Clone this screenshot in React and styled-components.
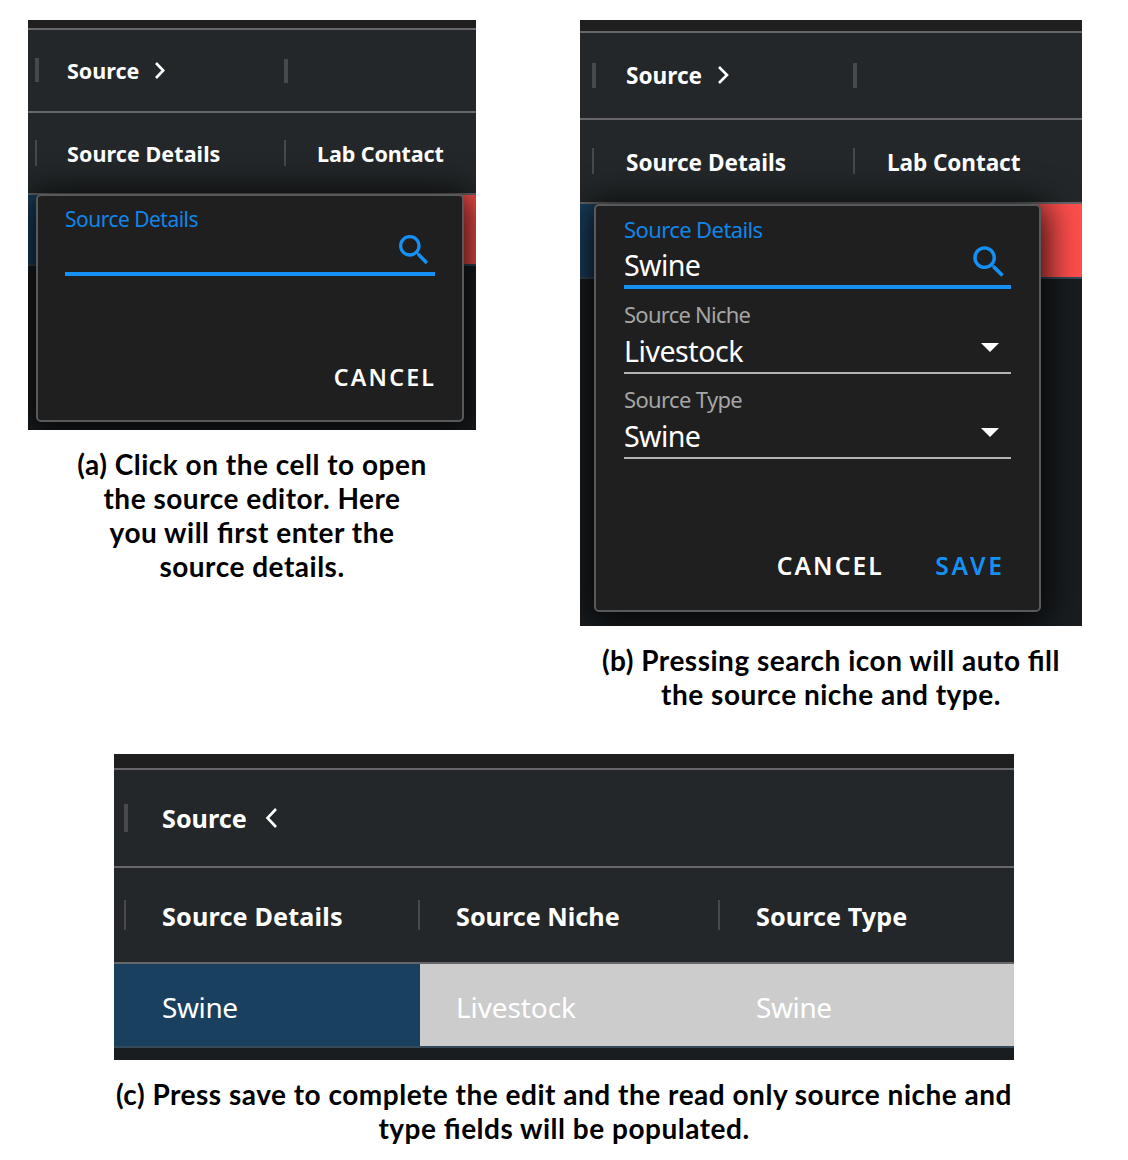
import React from "react";
import styled, { createGlobalStyle, css } from "styled-components";

const Global = createGlobalStyle`
  *, *::before, *::after { box-sizing: border-box; }
  html, body { margin: 0; background: #fff; }
`;

const uiFont = `"Noto Sans", "Open Sans", sans-serif`;

const Page = styled.main`
  width: 1128px;
  height: 1160px;
  padding: 20px 46px 0 28px;
  overflow: hidden;
`;

const TopFigures = styled.div`
  display: flex;
  justify-content: space-between;
  align-items: flex-start;
  height: 734px;
`;

const Figure = styled.figure`
  margin: ${(p) => p.$margin || "0"};
  width: ${(p) => p.$width}px;
`;

const Caption = styled.figcaption`
  margin: ${(p) => p.$margin};
  font: 700 28px/34px Lato, sans-serif;
  letter-spacing: 0.51px;
  font-feature-settings: "liga" 1;
  color: #000;
  text-align: center;
  white-space: nowrap;
`;

const Panel = styled.div`
  position: relative;
  height: ${(p) => p.$height}px;
  overflow: hidden;
  background: #191d20;
`;

const TopStrip = styled.div`
  height: ${(p) => p.$height}px;
  background: #1f1f1f;
`;

const HeaderRow = styled.div`
  display: flex;
  align-items: center;
  height: ${(p) => p.$height}px;
  padding-left: ${(p) => p.$inset}px;
  border-top: 2px solid #67676b;
  background: #232729;
`;

const HeaderCell = styled.div`
  display: flex;
  align-items: center;
  flex: none;
  width: ${(p) => p.$width}px;
`;

const Tick = styled.span`
  flex: none;
  width: ${(p) => p.$indent}px;
  height: ${(p) => p.$height}px;
  border-left: ${(p) => (p.$thick ? 4 : 2)}px solid #47494c;
`;

const Text = styled.span`
  margin-top: ${(p) => p.$drop || 0}px;
  font-family: ${uiFont};
  font-weight: ${(p) => p.$weight || 400};
  font-size: ${(p) => p.$size}px;
  letter-spacing: ${(p) => p.$track || 0}px;
  color: ${(p) => p.$color || "#fff"};
  line-height: 1.2;
  white-space: nowrap;
`;

const Chevron = styled.svg`
  flex: none;
  width: ${(p) => p.$width}px;
  height: ${(p) => p.$height}px;
  margin-left: ${(p) => p.$gap}px;
  fill: none;
  stroke: #fff;
  stroke-width: 2.6;
`;

const BodyRow = styled.div`
  display: flex;
  height: ${(p) => p.$height}px;
  border-top: 2px solid #67676b;
  border-bottom: 2px solid #34495a;
`;

const BodyCell = styled.div`
  display: flex;
  align-items: center;
  flex: ${(p) => (p.$width ? `0 0 ${p.$width}px` : "1")};
  padding: ${(p) => p.$pad || "0"};
  background: ${(p) => p.$bg};
`;

const Dialog = styled.div`
  position: absolute;
  left: ${(p) => p.$left}px;
  top: ${(p) => p.$top}px;
  width: ${(p) => p.$width}px;
  height: ${(p) => p.$height}px;
  padding: ${(p) => p.$pad};
  display: flex;
  flex-direction: column;
  background: #1f1f1f;
  border: 2px solid #58595b;
  border-radius: 5px;
  box-shadow: 0 4px 34px 6px rgba(0, 0, 0, 0.85);
`;

const Field = styled.div`
  display: flex;
  flex-direction: column;
  flex: none;
  height: ${(p) => p.$height}px;
`;

const FieldLabel = styled(Text)`
  line-height: 26px;
`;

const FieldInput = styled.div`
  display: flex;
  align-items: center;
  justify-content: space-between;
  height: ${(p) => p.$height}px;
  ${(p) =>
    p.$active
      ? css`border-bottom: 4px solid #1590f5;`
      : css`border-bottom: 2px solid #b4b4b4;`}
`;

const FieldValue = styled(Text)`
  line-height: 34px;
`;

const SearchSvg = styled.svg`
  flex: none;
  width: ${(p) => p.$size}px;
  height: ${(p) => p.$size}px;
  margin: ${(p) => p.$margin};
  fill: #1590f5;
`;

const SearchIcon = ({ size, margin }) => (
  <SearchSvg viewBox="0 0 24 24" $size={size} $margin={margin}>
    <path d="M15.5 14h-.79l-.28-.27C15.41 12.59 16 11.11 16 9.5 16 5.91 13.09 3 9.5 3S3 5.91 3 9.5 5.91 16 9.5 16c1.61 0 3.09-.59 4.23-1.57l.27.28v.79l5 4.99L20.49 19l-4.99-5zm-6 0C7.01 14 5 11.99 5 9.5S7.01 5 9.5 5 14 7.01 14 9.5 11.99 14 9.5 14z" />
  </SearchSvg>
);

const CaretSvg = styled.svg`
  width: 18px;
  height: 9px;
  margin: 0 12px 4px 0;
  fill: #fff;
`;

const Caret = () => (
  <CaretSvg viewBox="0 0 18 9">
    <path d="M0 0h18L9 9z" />
  </CaretSvg>
);

const Actions = styled.div`
  display: flex;
  justify-content: flex-end;
  gap: ${(p) => p.$gap || 0}px;
  margin-top: auto;
  padding-right: ${(p) => p.$right}px;
`;

const Button = styled.button`
  padding: 0;
  border: 0;
  background: none;
  font: 600 ${(p) => p.$size}px/30px ${uiFont};
  letter-spacing: ${(p) => p.$track}px;
  margin-right: ${(p) => -p.$track}px;
  color: ${(p) => (p.$primary ? "#1590f5" : "#fff")};
`;

export default function App() {
  return (
    <>
      <Global />
      <Page>
        <TopFigures>
          <Figure $width={448}>
            <Panel $height={410}>
              <TopStrip $height={8} />
              <HeaderRow $height={83} $inset={7}>
                <HeaderCell $width={249}>
                  <Tick $thick $indent={32} $height={24} />
                  <Text $weight={700} $size={21.5}>Source</Text>
                  <Chevron viewBox="0 0 10 17" $width={10} $height={17} $gap={16}>
                    <path d="M1 1l7.2 7.5L1 16" />
                  </Chevron>
                </HeaderCell>
                <HeaderCell>
                  <Tick $thick $indent={32} $height={24} />
                </HeaderCell>
              </HeaderRow>
              <HeaderRow $height={82} $inset={7}>
                <HeaderCell $width={249}>
                  <Tick $indent={32} $height={26} />
                  <Text $weight={700} $size={21.5} $track={0.08} $drop={2}>Source Details</Text>
                </HeaderCell>
                <HeaderCell>
                  <Tick $indent={33} $height={26} />
                  <Text $weight={700} $size={21.5} $track={-0.1} $drop={2}>Lab Contact</Text>
                </HeaderCell>
              </HeaderRow>
              <BodyRow $height={73}>
                <BodyCell $width={257} $bg="#1a4060" />
                <BodyCell $bg="#ff4f4d" />
              </BodyRow>
              <Dialog $left={8} $top={174} $width={428} $height={228} $pad="10px 27px 28px">
                <Field $height={85}>
                  <FieldLabel $size={21} $track={-0.52} $color="#1186e8">Source Details</FieldLabel>
                  <FieldInput $active $height={44}>
                    <span />
                    <SearchIcon size={40} margin="0 1px 5px 0" />
                  </FieldInput>
                </Field>
                <Actions $right={1}>
                  <Button $size={23.2} $track={2.2}>CANCEL</Button>
                </Actions>
              </Dialog>
            </Panel>
            <Caption $margin="17px 0 0">
              (a) Click on the cell to open<br />the source editor. Here<br />you will first enter the<br />source details.
            </Caption>
          </Figure>

          <Figure $width={502}>
            <Panel $height={606}>
              <TopStrip $height={11} />
              <HeaderRow $height={87} $inset={12}>
                <HeaderCell $width={261}>
                  <Tick $thick $indent={34} $height={25} />
                  <Text $weight={700} $size={22.6}>Source</Text>
                  <Chevron viewBox="0 0 11 18" $width={11} $height={18} $gap={16}>
                    <path d="M1 1l8 8-8 8" />
                  </Chevron>
                </HeaderCell>
                <HeaderCell>
                  <Tick $thick $indent={34} $height={25} />
                </HeaderCell>
              </HeaderRow>
              <HeaderRow $height={84} $inset={12}>
                <HeaderCell $width={261}>
                  <Tick $indent={34} $height={26} />
                  <Text $weight={700} $size={22.6} $drop={4}>Source Details</Text>
                </HeaderCell>
                <HeaderCell>
                  <Tick $indent={34} $height={26} />
                  <Text $weight={700} $size={22.6} $track={-0.1} $drop={4}>Lab Contact</Text>
                </HeaderCell>
              </HeaderRow>
              <BodyRow $height={77}>
                <BodyCell $width={273} $bg="#1a4060" />
                <BodyCell $bg="#ff4f4d" />
              </BodyRow>
              <Dialog $left={14} $top={184} $width={447} $height={408} $pad="10px 28px 29px">
                <Field $height={85}>
                  <FieldLabel $size={22} $track={-0.6} $color="#1186e8">Source Details</FieldLabel>
                  <FieldInput $active $height={47}>
                    <FieldValue $size={28.6} $track={-0.6} $drop={3}>Swine</FieldValue>
                    <SearchIcon size={42} margin="0 1px 3px 0" />
                  </FieldInput>
                </Field>
                <Field $height={85}>
                  <FieldLabel $size={22} $track={-0.75} $color="#a5a5a5">Source Niche</FieldLabel>
                  <FieldInput $height={47}>
                    <FieldValue $size={28.6} $track={-0.48} $drop={2}>Livestock</FieldValue>
                    <Caret />
                  </FieldInput>
                </Field>
                <Field $height={85}>
                  <FieldLabel $size={22} $track={-0.65} $color="#a5a5a5">Source Type</FieldLabel>
                  <FieldInput $height={47}>
                    <FieldValue $size={28.6} $track={-0.6} $drop={2}>Swine</FieldValue>
                    <Caret />
                  </FieldInput>
                </Field>
                <Actions $gap={53.5} $right={9}>
                  <Button $size={24.6} $track={2.1}>CANCEL</Button>
                  <Button $size={24.6} $track={2.8} $primary>SAVE</Button>
                </Actions>
              </Dialog>
            </Panel>
            <Caption $margin="17px 0 0">
              (b) Pressing search icon will auto fill<br />the source niche and type.
            </Caption>
          </Figure>
        </TopFigures>

        <Figure $width={900} $margin="0 0 0 86px">
          <Panel $height={306}>
            <TopStrip $height={14} />
            <HeaderRow $height={98} $inset={10}>
              <HeaderCell>
                <Tick $thick $indent={38} $height={28} />
                <Text $weight={700} $size={25.2}>Source</Text>
                <Chevron viewBox="0 0 12 20" $width={12} $height={20} $gap={18.5}>
                  <path d="M11 1L2.5 10l8.5 9" />
                </Chevron>
              </HeaderCell>
            </HeaderRow>
            <HeaderRow $height={96} $inset={10}>
              <HeaderCell $width={294}>
                <Tick $indent={38} $height={30} />
                <Text $weight={700} $size={25.2} $track={0.16} $drop={2}>Source Details</Text>
              </HeaderCell>
              <HeaderCell $width={300}>
                <Tick $indent={38} $height={30} />
                <Text $weight={700} $size={25.2} $drop={2}>Source Niche</Text>
              </HeaderCell>
              <HeaderCell>
                <Tick $indent={38} $height={30} />
                <Text $weight={700} $size={25.2} $track={0.05} $drop={2}>Source Type</Text>
              </HeaderCell>
            </HeaderRow>
            <BodyRow $height={86}>
              <BodyCell $width={306} $bg="#1a4060" $pad="6px 0 0 48px">
                <Text $size={28} $track={-0.4}>Swine</Text>
              </BodyCell>
              <BodyCell $width={300} $bg="#ccc" $pad="6px 0 0 36px">
                <Text $size={28} $track={-0.1}>Livestock</Text>
              </BodyCell>
              <BodyCell $bg="#ccc" $pad="6px 0 0 36px">
                <Text $size={28} $track={-0.4}>Swine</Text>
              </BodyCell>
            </BodyRow>
          </Panel>
          <Caption $margin="17px 0 0">
            (c) Press save to complete the edit and the read only source niche and<br />type fields will be populated.
          </Caption>
        </Figure>
      </Page>
    </>
  );
}
